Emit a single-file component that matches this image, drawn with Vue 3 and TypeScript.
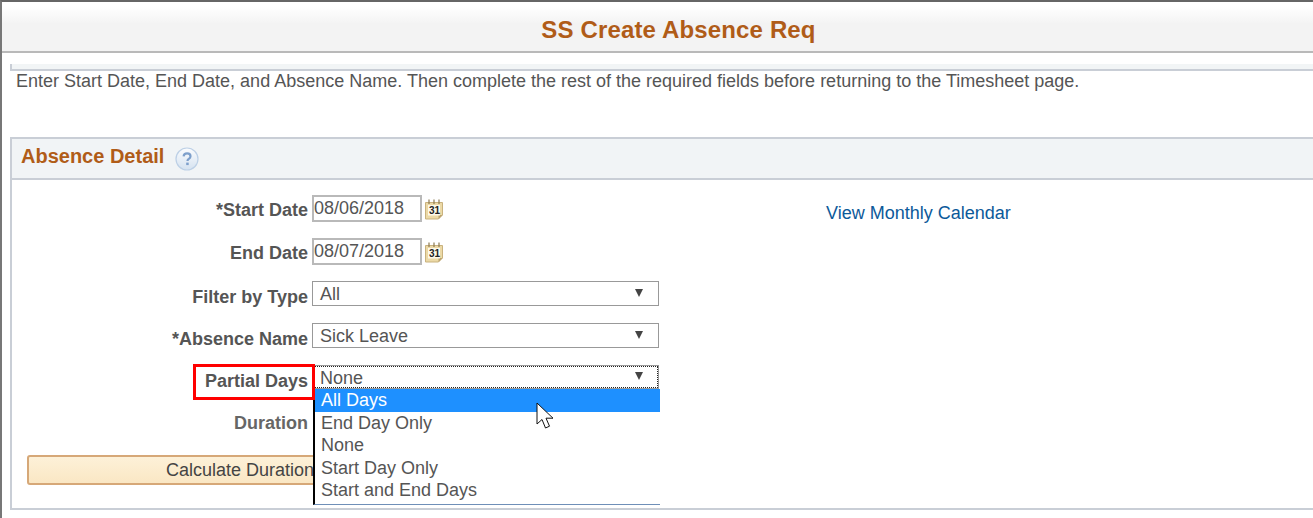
<script setup lang="ts">
interface Row {
  label: string
  value: string
  kind: 'date' | 'select'
}
const rows: Row[] = [
  { label: '*Start Date', value: '08/06/2018', kind: 'date' },
  { label: 'End Date', value: '08/07/2018', kind: 'date' },
  { label: 'Filter by Type', value: 'All', kind: 'select' },
  { label: '*Absence Name', value: 'Sick Leave', kind: 'select' },
]
const options = ['All Days', 'End Day Only', 'None', 'Start Day Only', 'Start and End Days']
</script>

<template>
  <div class="page">
    <header class="title">SS Create Absence Req</header>
    <div class="content">
      <div class="strip"></div>
      <p class="intro">Enter Start Date, End Date, and Absence Name. Then complete the rest of the required fields before returning to the Timesheet page.</p>
      <section class="panel">
        <div class="panel-head">
          <h2>Absence Detail</h2>
          <svg class="help" width="24" height="24" viewBox="0 0 24 24">
            <defs>
              <linearGradient id="helpFill" x1="0" y1="0" x2="0" y2="1">
                <stop offset="0" stop-color="#fbfcfe" />
                <stop offset="1" stop-color="#d5e2f0" />
              </linearGradient>
            </defs>
            <circle cx="12" cy="12" r="11" fill="url(#helpFill)" stroke="#bdd0e6" stroke-width="1.2" />
            <path d="M8.600 9.400c.2-2 1.700-3 3.500-3 2 0 3.400 1.100 3.400 2.800 0 1.300-.7 2-1.700 2.700-.9.600-1.300 1-1.300 2.100" fill="none" stroke="#7d9fcb" stroke-width="2.200" />
            <rect x="11.200" y="15.600" width="2.500" height="2.500" fill="#7d9fcb" />
          </svg>
        </div>
        <div class="panel-body">
          <div class="form">
            <div v-for="r in rows" :key="r.label" class="row" :class="r.kind">
              <label>{{ r.label }}</label>
              <template v-if="r.kind === 'date'">
                <div class="date-input">{{ r.value }}</div>
                <svg class="cal" width="20" height="24" viewBox="0 0 20 24">
                  <path d="M1.500 4.500h17v12.500l-4 4h-13z" fill="#ecd9a6" stroke="#c9b27e" />
                  <path d="M18.500 17l-4 4v-4z" fill="#b9a26d" />
                  <rect x="4" y="7" width="12" height="10.500" fill="#fdf9ea" />
                  <path d="M5 1.500v4.500M10 1.500v4.500M15 1.500v4.500" stroke="#8d7a50" stroke-width="1.200" />
                  <text x="5" y="15.500" class="cal-num">31</text>
                </svg>
              </template>
              <div v-else class="select">
                <span>{{ r.value }}</span>
                <i class="arrow"></i>
              </div>
            </div>
            <div class="row partial">
              <label>Partial Days</label>
              <div class="select focus">
                <span>None</span>
                <i class="arrow"></i>
              </div>
              <div class="redbox"></div>
              <ul class="menu">
                <li v-for="(o, i) in options" :key="o" :class="{ on: i === 0 }">{{ o }}</li>
              </ul>
              <svg class="cursor" width="21" height="28" viewBox="0 0 21 28">
                <path d="M1 1v21l5-4.500 3.500 8.500 4-1.800-3.500-8h7z" fill="#fff" stroke="#111" stroke-width="1" />
              </svg>
            </div>
            <div class="row duration">
              <label>Duration</label>
            </div>
            <button class="calc" type="button">Calculate Duration</button>
          </div>
          <a class="monthly">View Monthly Calendar</a>
        </div>
      </section>
    </div>
  </div>
</template>

<style>
html, body { margin: 0; background: #fff; }
</style>

<style scoped>
.page {
  width: 1313px;
  height: 518px;
  box-sizing: border-box;
  overflow: hidden;
  border-top: 2px solid #666;
  border-left: 2px solid #777;
  font-family: "Liberation Sans", Arial, sans-serif;
  font-size: 18px;
  color: #555;
  background: #fff;
}
.title {
  height: 49px;
  border-bottom: 2px solid #b9b9b9;
  background: linear-gradient(#fff 4px, #f3f3f3 22px);
  margin-left: -2px;
  padding-left: 44px;
  text-align: center;
  color: #b05c18;
  font-size: 24px;
  letter-spacing: 0.150px;
  font-weight: 700;
  line-height: 56px;
}
.content { padding-left: 8px; }
.strip {
  margin-top: 11px;
  height: 5px;
  background: #f2f5f6;
  border-left: 2px solid #c9ced6;
  border-bottom: 2px solid #c9ced6;
}
.intro {
  margin: 0 0 0 6px;
  height: 66px;
  line-height: 21px;
  font-size: 18px;
}
.panel {
  border: 2px solid #c9ced6;
  border-right: 0;
  height: 373px;
  box-sizing: border-box;
}
.panel-head {
  height: 39px;
  display: flex;
  align-items: center;
  gap: 11px;
  padding-left: 9px;
  background: #f1f4f6;
  border-bottom: 2px solid #c9ced6;
}
.panel-head h2 {
  margin: 0 0 5px;
  color: #b05c18;
  font-size: 20px;
  font-weight: 700;
}
.panel-body { display: flex; }
.form {
  width: 814px;
  padding-top: 15px;
}
.row {
  display: flex;
  align-items: center;
  height: 27px;
  margin-bottom: 16px;
  position: relative;
}
.row label {
  width: 296px;
  text-align: right;
  font-weight: 700;
  margin-right: 4px;
  flex: none;
  padding-top: 3px;
}
.date-input {
  width: 110px;
  height: 27px;
  box-sizing: border-box;
  border: 2px solid #b9b9b9;
  padding-left: 0;
  font-size: 18px;
  line-height: 22px;
}
.cal { margin-left: 2px; margin-top: 3px; }
.cal-num { font: 700 10px "Liberation Sans", sans-serif; fill: #222; }
.select {
  width: 347px;
  height: 25px;
  box-sizing: border-box;
  border: 1px solid #999;
  display: flex;
  align-items: center;
  justify-content: space-between;
  padding: 0 15px 0 7px;
  font-size: 18px;
}
.select span { margin-top: 2px; }
.select .arrow { margin-bottom: 2px; }
.row.select {
  width: auto;
  height: 25px;
  border: 0;
  padding: 0;
  justify-content: flex-start;
  margin-bottom: 17px;
}
.row.select label { padding-top: 7px; }
.row.select .select { flex: none; }
.row.partial { height: 25px; margin-bottom: 21px; }
.row.partial label { padding-top: 7px; }
.select.focus {
  outline: 1px dotted #222;
  outline-offset: -2px;
  height: 24px;
  align-self: flex-start;
}
.arrow {
  width: 0;
  height: 0;
  border-left: 4px solid transparent;
  border-right: 4px solid transparent;
  border-top: 8px solid #444;
}
.redbox {
  position: absolute;
  left: 181px;
  top: -1px;
  width: 116px;
  height: 30px;
  border: 3px solid #f00;
  pointer-events: none;
  z-index: 3;
}
.menu {
  position: absolute;
  left: 301px;
  top: 24px;
  width: 347px;
  height: 116px;
  box-sizing: border-box;
  margin: 0;
  padding: 0;
  list-style: none;
  background: #fff;
  border-left: 2px solid #000;
  border-bottom: 1px solid #6f8fb8;
  z-index: 2;
}
.menu li {
  height: 23px;
  line-height: 22px;
  padding-left: 6px;
  font-size: 18px;
}
.menu li:nth-child(even) { height: 22px; }
.menu li.on {
  background: #1e90ff;
  color: #fff;
}
.cursor {
  position: absolute;
  left: 524px;
  top: 37px;
  z-index: 4;
}
.row.duration { height: 20px; margin-bottom: 24px; }
.row.duration label { color: #666; padding-top: 5px; }
.calc {
  display: block;
  margin-left: 15px;
  width: 426px;
  height: 30px;
  box-sizing: border-box;
  border: 2px solid #d6a878;
  border-radius: 3px;
  background: linear-gradient(#fdf1d8, #fae7c4);
  color: #444;
  font: 18px "Liberation Sans", Arial, sans-serif;
  padding: 0;
}
.monthly {
  margin-top: 23px;
  color: #0c5a9a;
  font-size: 18px;
  line-height: 20px;
  height: 20px;
}
</style>
